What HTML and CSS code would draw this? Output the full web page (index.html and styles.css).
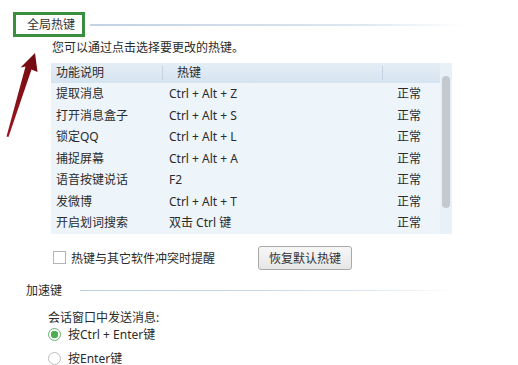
FILE: index.html
```html
<!DOCTYPE html>
<html lang="zh-CN">
<head>
    <meta charset="UTF-8">
    <title>全局热键</title>
    <link rel="stylesheet" href="styles.css">
</head>
<body>
<div class="panel">
    <!-- 全局热键 -->
    <div class="group-title">
        <div class="title-box">全局热键</div>
        <div class="title-line"></div>
    </div>
    <p class="hint">您可以通过点击选择要更改的热键。</p>

    <div class="hotkey-list">
        <div class="list-body">
            <div class="row head">
                <span class="c1">功能说明</span>
                <span class="c2">热键</span>
                <span class="c3"></span>
            </div>
            <div class="row"><span class="c1">提取消息</span><span class="c2">Ctrl + Alt + Z</span><span class="c3">正常</span></div>
            <div class="row"><span class="c1">打开消息盒子</span><span class="c2">Ctrl + Alt + S</span><span class="c3">正常</span></div>
            <div class="row"><span class="c1">锁定QQ</span><span class="c2">Ctrl + Alt + L</span><span class="c3">正常</span></div>
            <div class="row"><span class="c1">捕捉屏幕</span><span class="c2">Ctrl + Alt + A</span><span class="c3">正常</span></div>
            <div class="row"><span class="c1">语音按键说话</span><span class="c2">F2</span><span class="c3">正常</span></div>
            <div class="row"><span class="c1">发微博</span><span class="c2">Ctrl + Alt + T</span><span class="c3">正常</span></div>
            <div class="row"><span class="c1">开启划词搜索</span><span class="c2">双击 Ctrl 键</span><span class="c3">正常</span></div>
        </div>
        <div class="scrollbar"><div class="thumb"></div></div>
    </div>

    <div class="options">
        <label class="check"><span class="box"></span>热键与其它软件冲突时提醒</label>
        <button class="btn">恢复默认热键</button>
    </div>

    <!-- 加速键 -->
    <div class="sub-title">
        <span>加速键</span>
        <div class="title-line"></div>
    </div>
    <p class="send-label">会话窗口中发送消息:</p>
    <div class="radios">
        <label class="radio"><span class="dot on"></span>按Ctrl + Enter键</label>
        <label class="radio"><span class="dot"></span>按Enter键</label>
    </div>

    <svg class="arrow" width="45" height="95" viewBox="0 0 45 95">
        <defs>
            <linearGradient id="ar" x1="0" y1="1" x2="1" y2="0">
                <stop offset="0" stop-color="#9c1620"/>
                <stop offset="1" stop-color="#6e0a10"/>
            </linearGradient>
        </defs>
        <path d="M35 3 L37.5 22 L31.5 19.5 L8.5 87 L6.5 86.5 L25.5 16.5 L20.5 17.5 Z" fill="url(#ar)"/>
    </svg>
</div>
</body>
</html>
```

FILE: styles.css
```css
* {
    margin: 0;
    padding: 0;
    box-sizing: border-box;
}
body {
    font-family: "Noto Sans", "Noto Sans CJK SC", sans-serif;
    font-size: 12px;
    color: #2b2b2b;
    background: #ffffff;
}
.panel {
    position: relative;
    width: 518px;
    height: 365px;
    padding-top: 12px;
    overflow: hidden;
}
.group-title {
    display: flex;
    align-items: center;
    margin-left: 13px;
}
.title-box {
    width: 72px;
    height: 25px;
    border: 3px solid #3b8e3e;
    padding-left: 11px;
    line-height: 19px;
    color: #333;
}
.title-line {
    flex: 0 0 375px;
    height: 2px;
    margin-left: 5px;
    background: linear-gradient(to right, #c3d3e3, #dbe6f0 70%, rgba(255,255,255,0));
}
.hint {
    margin: 2px 0 0 52px;
    line-height: 18px;
}
.hotkey-list {
    display: flex;
    width: 401px;
    margin: 6px 0 0 51px;
    background: #edf4fa;
}
.list-body {
    width: 389px;
}
.row {
    display: grid;
    grid-template-columns: 111px 220px 58px;
    height: 21.5px;
    line-height: 21.5px;
}
.row .c1 { padding-left: 5px; }
.row .c2 { padding-left: 7px; }
.row .c3 { padding-left: 15px; }
.row.head {
    height: 20px;
    line-height: 20px;
    background: linear-gradient(to bottom, #e4edf5, #d6e4f0);
}
.row.head .c2 {
    padding-left: 14px;
    border-left: 1px solid #c2d2e0;
    margin: 3px 0;
    line-height: 14px;
}
.row.head .c3 {
    border-left: 1px solid #c2d2e0;
    margin: 3px 0;
}
.scrollbar {
    width: 12px;
    padding: 13px 2px 0;
    background: #e9f1f8;
}
.thumb {
    height: 132px;
    border-radius: 4px;
    background: #c3c9cf;
}
.options {
    display: flex;
    align-items: center;
    margin: 12px 0 0 53px;
}
.check {
    display: flex;
    align-items: center;
    width: 205px;
}
.box {
    width: 13px;
    height: 13px;
    border: 1px solid #b5b5b5;
    background: #fff;
    margin-right: 5px;
}
.btn {
    width: 94px;
    height: 24px;
    font: inherit;
    color: #333;
    border: 1px solid #a9a9a9;
    border-radius: 3px;
    background: linear-gradient(to bottom, #f7f7f7, #e6e6e6);
}
.sub-title {
    display: flex;
    align-items: center;
    margin: 13px 0 0 26px;
    line-height: 16px;
}
.sub-title .title-line {
    flex-basis: 380px;
    height: 1px;
    margin-left: 18px;
    background: linear-gradient(to right, #b9cde0, #d5e2ee 70%, rgba(255,255,255,0));
}
.send-label {
    margin: 11px 0 0 48px;
    line-height: 16px;
}
.radios {
    display: flex;
    flex-direction: column;
    gap: 10px;
    margin: 2px 0 0 48px;
}
.radio {
    display: flex;
    align-items: center;
    height: 14px;
    line-height: 14px;
}
.dot {
    width: 13px;
    height: 13px;
    border-radius: 50%;
    border: 1px solid #bdbdbd;
    background: #fff;
    margin-right: 7px;
}
.dot.on {
    border-color: #69b56c;
    background: radial-gradient(circle, #4caf50 0 3.5px, #fff 4px);
}
.arrow {
    position: absolute;
    left: 0;
    top: 50px;
}
```
